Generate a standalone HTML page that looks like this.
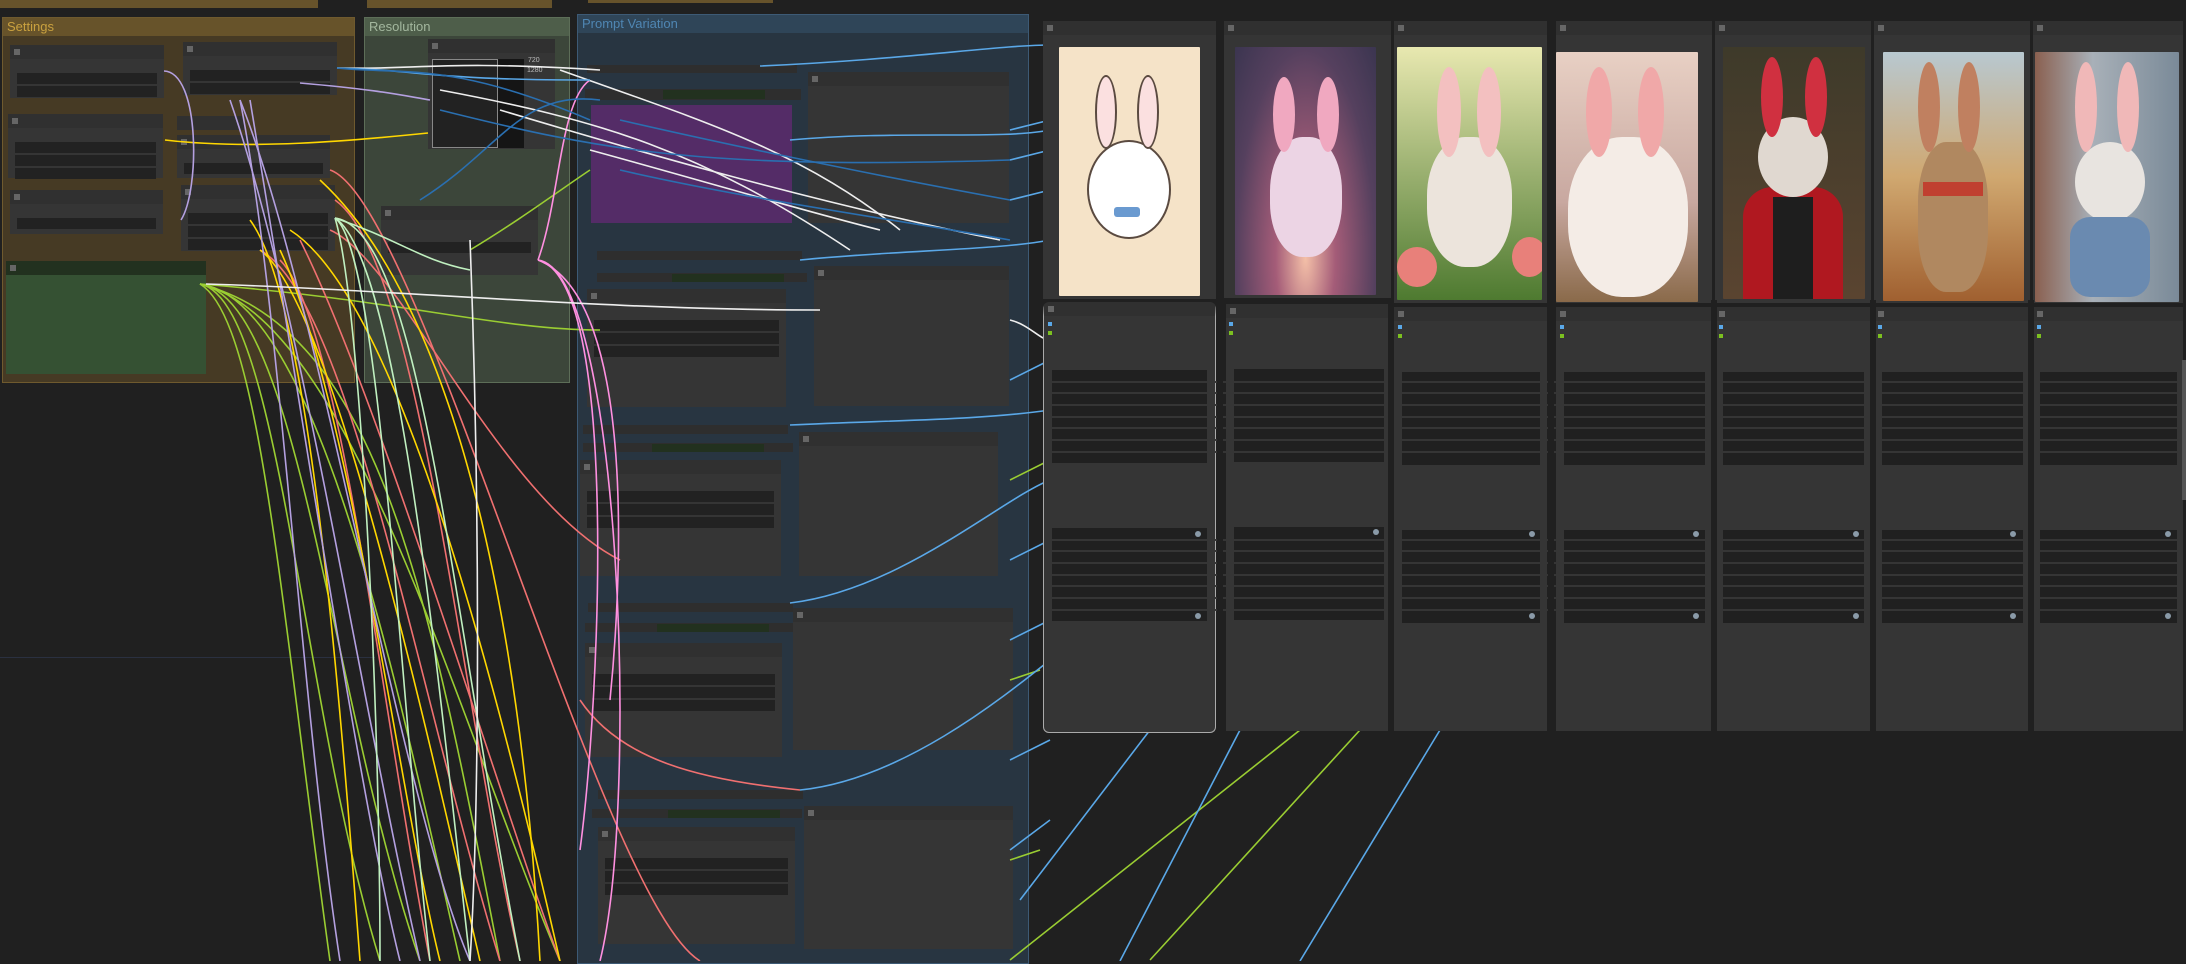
<!DOCTYPE html>
<html><head><meta charset="utf-8"><style>
*{margin:0;padding:0;box-sizing:border-box}
body{width:2186px;height:961px;background:#202020;position:relative;overflow:hidden;font-family:"Liberation Sans",sans-serif}
div{position:absolute}
.g{border:1px solid rgba(255,255,255,0.15)}
.gh{left:0;right:0;top:0;height:18px;font-size:13px;padding-left:4px;line-height:18px}
.n{background:#353535;border-top:14px solid #303030}
.n::before{content:"";position:absolute;left:4px;top:-10px;width:6px;height:6px;background:#666}
.w{background:#222;height:11px}
.bar{background:#2e2e2e;height:9px}
.img{border-radius:1px;overflow:hidden}
</style></head><body>
<div style="left:0;top:0;width:318px;height:8px;background:#67532b"></div>
<div style="left:367px;top:0;width:185px;height:8px;background:#67532b"></div>
<div style="left:588px;top:0;width:185px;height:3px;background:#67532b"></div>

<div class="g" style="left:2px;top:17px;width:353px;height:366px;background:#463a24;border-color:#6f5a2e">
 <div class="gh" style="background:#67532a;color:#c9a13f">Settings</div></div>
<div class="g" style="left:364px;top:17px;width:206px;height:366px;background:#3c463a;border-color:#5d6e58">
 <div class="gh" style="background:#4e5e4a;color:#a3b79e">Resolution</div></div>
<div class="g" style="left:577px;top:14px;width:452px;height:950px;background:#283541;border-color:#3d5a75">
 <div class="gh" style="background:#2f4558;color:#4f86b3">Prompt Variation</div></div>

<div class="n" style="left:10px;top:45px;width:154px;height:53px"><div class="w" style="left:7px;top:14px;width:140px"></div><div class="w" style="left:7px;top:27px;width:140px"></div></div>
<div class="n" style="left:183px;top:42px;width:154px;height:53px"><div class="w" style="left:7px;top:14px;width:140px"></div><div class="w" style="left:7px;top:27px;width:140px"></div></div>
<div class="n" style="left:8px;top:114px;width:155px;height:64px"><div class="w" style="left:7px;top:14px;width:141px"></div><div class="w" style="left:7px;top:27px;width:141px"></div><div class="w" style="left:7px;top:40px;width:141px"></div></div>
<div style="left:177px;top:116px;width:67px;height:14px;background:#303030"></div>
<div class="n" style="left:177px;top:135px;width:153px;height:43px"><div class="w" style="left:7px;top:14px;width:139px"></div></div>
<div class="n" style="left:10px;top:190px;width:153px;height:44px"><div class="w" style="left:7px;top:14px;width:139px"></div></div>
<div class="n" style="left:181px;top:185px;width:154px;height:66px"><div class="w" style="left:7px;top:14px;width:140px"></div><div class="w" style="left:7px;top:27px;width:140px"></div><div class="w" style="left:7px;top:40px;width:140px"></div></div>
<div class="n" style="left:6px;top:261px;width:200px;height:113px;background:#355133;border-top-color:#22311f"></div>

<div class="n" style="left:428px;top:39px;width:127px;height:110px">
 <div style="left:4px;top:6px;width:66px;height:89px;background:#222;border:1px solid #888"></div>
 <div style="left:70px;top:6px;width:26px;height:89px;background:#151515"></div>
 <div style="left:100px;top:4px;font-size:7px;color:#bbb">720</div>
 <div style="left:99px;top:14px;font-size:7px;color:#bbb">1280</div></div>
<div class="n" style="left:381px;top:206px;width:157px;height:69px"><div class="w" style="left:7px;top:22px;width:143px"></div></div>

<div class="bar" style="left:587px;top:65px;width:210px;height:8px"></div>
<div class="bar" style="left:585px;top:89px;width:216px;height:11px"></div>
<div style="left:663px;top:90px;width:102px;height:9px;background:#22311f"></div>
<div style="left:591px;top:105px;width:201px;height:118px;background:#542c67"></div>
<div class="n" style="left:808px;top:72px;width:201px;height:151px"></div>

<div class="bar" style="left:597px;top:251px;width:205px"></div>
<div class="bar" style="left:597px;top:273px;width:210px"></div>
<div style="left:672px;top:274px;width:112px;height:8px;background:#22311f"></div>
<div class="n" style="left:587px;top:289px;width:199px;height:118px"><div class="w" style="left:7px;top:17px;width:185px"></div><div class="w" style="left:7px;top:30px;width:185px"></div><div class="w" style="left:7px;top:43px;width:185px"></div></div>
<div class="n" style="left:814px;top:266px;width:195px;height:140px"></div>

<div class="bar" style="left:583px;top:425px;width:205px"></div>
<div class="bar" style="left:583px;top:443px;width:210px"></div>
<div style="left:652px;top:444px;width:112px;height:8px;background:#22311f"></div>
<div class="n" style="left:580px;top:460px;width:201px;height:116px"><div class="w" style="left:7px;top:17px;width:187px"></div><div class="w" style="left:7px;top:30px;width:187px"></div><div class="w" style="left:7px;top:43px;width:187px"></div></div>
<div class="n" style="left:799px;top:432px;width:199px;height:144px"></div>

<div class="bar" style="left:588px;top:603px;width:205px"></div>
<div class="bar" style="left:585px;top:623px;width:210px"></div>
<div style="left:657px;top:624px;width:112px;height:8px;background:#22311f"></div>
<div class="n" style="left:585px;top:643px;width:197px;height:114px"><div class="w" style="left:7px;top:17px;width:183px"></div><div class="w" style="left:7px;top:30px;width:183px"></div><div class="w" style="left:7px;top:43px;width:183px"></div></div>
<div class="n" style="left:793px;top:608px;width:220px;height:142px"></div>

<div class="bar" style="left:598px;top:790px;width:205px"></div>
<div class="bar" style="left:592px;top:809px;width:210px"></div>
<div style="left:668px;top:810px;width:112px;height:8px;background:#22311f"></div>
<div class="n" style="left:598px;top:827px;width:197px;height:117px"><div class="w" style="left:7px;top:17px;width:183px"></div><div class="w" style="left:7px;top:30px;width:183px"></div><div class="w" style="left:7px;top:43px;width:183px"></div></div>
<div class="n" style="left:804px;top:806px;width:209px;height:143px"></div>

<div style="left:0;top:657px;width:375px;height:1px;background:#2a3040"></div>

<svg style="position:absolute;left:0;top:0" width="2186" height="961" fill="none" stroke-width="1.6">
<g stroke="#9acd32">
<path d="M200 284 C300 300,330 700,420 961"/><path d="M200 284 C280 300,300 700,380 961"/><path d="M200 284 C320 300,400 700,460 961"/><path d="M200 284 C400 300,500 330,600 330"/><path d="M200 284 C350 320,450 700,560 961"/><path d="M200 284 C260 320,280 600,330 961"/><path d="M200 284 C380 330,430 600,500 961"/>
<path d="M1010 960 L1300 730"/><path d="M1150 960 L1360 730"/><path d="M1010 480 L1050 460"/><path d="M1010 680 L1040 670"/><path d="M1010 860 L1040 850"/><path d="M470 250 C520 220,560 190,590 170"/></g>
<g stroke="#f07070"><path d="M335 200 C420 260,460 700,520 961"/><path d="M260 250 C350 300,420 700,500 961"/><path d="M330 170 C420 200,600 900,700 961"/><path d="M300 240 C380 400,500 800,560 961"/><path d="M580 700 C620 760,700 780,800 790"/><path d="M330 230 C400 260,500 500,620 560"/><path d="M280 260 C340 320,380 700,430 961"/></g>
<g stroke="#ffd700"><path d="M165 140 C250 150,350 141,428 133"/><path d="M260 250 C330 300,420 700,480 961"/><path d="M280 250 C350 400,400 800,440 961"/><path d="M290 230 C400 300,500 700,560 961"/><path d="M320 180 C450 300,520 600,540 961"/><path d="M250 220 C310 300,340 700,360 961"/></g>
<g stroke="#b4a0e0"><path d="M164 71 C200 72,200 190,181 220"/><path d="M230 100 C300 300,360 700,420 961"/><path d="M240 100 C320 300,400 800,470 961"/><path d="M300 83 C380 90,400 95,430 100"/><path d="M250 100 C300 400,360 800,400 961"/><path d="M240 100 C280 300,300 700,340 961"/></g>
<g stroke="#c0f0c0"><path d="M335 218 C400 260,440 700,470 961"/><path d="M335 218 C420 230,450 600,520 961"/><path d="M335 218 C380 250,400 700,430 961"/><path d="M335 218 C360 300,380 700,380 961"/><path d="M335 218 C400 240,420 260,470 270"/></g>
<g stroke="#ff90e0"><path d="M538 260 C620 270,640 800,600 961"/><path d="M538 260 C560 200,560 100,590 80"/><path d="M538 260 C620 280,600 700,580 850"/><path d="M538 260 C640 300,620 600,610 700"/></g>
<g stroke="#eee"><path d="M337 68 C420 70,440 60,600 70"/><path d="M206 284 C400 290,600 310,820 310"/><path d="M440 90 C600 120,700 150,850 250"/><path d="M500 110 C600 140,800 200,1000 240"/><path d="M470 240 C480 500,480 800,470 961"/><path d="M1010 320 C1030 325,1040 340,1050 340"/><path d="M560 70 C700 120,800 150,900 230"/><path d="M590 150 C700 180,800 210,880 230"/></g>
<g stroke="#5aa8e8"><path d="M337 68 C420 70,430 80,590 80"/><path d="M760 66 C900 60,1000 45,1050 45"/><path d="M800 260 C900 250,1000 250,1050 240"/><path d="M790 425 C900 420,980 420,1050 410"/><path d="M790 603 C900 590,1000 500,1050 480"/><path d="M800 790 C900 780,1000 700,1050 660"/><path d="M1020 900 L1150 730"/><path d="M1120 961 L1240 730"/><path d="M1300 961 L1440 730"/><path d="M1010 130 L1050 120"/><path d="M1010 160 L1050 150"/><path d="M1010 560 L1050 540"/><path d="M1010 760 L1050 740"/><path d="M1010 200 L1050 190"/><path d="M1010 380 L1050 360"/><path d="M1010 640 L1050 620"/><path d="M1010 850 L1050 820"/><path d="M790 140 C900 130,1000 140,1050 130"/></g>
<g stroke="#2a6fb0"><path d="M337 68 C400 75,450 60,590 120"/><path d="M440 110 C600 150,700 170,1010 160"/><path d="M420 200 C500 150,520 90,600 100"/><path d="M620 120 C750 150,900 180,1010 200"/><path d="M620 170 C750 200,900 220,1010 240"/></g>
</svg>

<div class="n" style="left:1043px;top:21px;width:173px;height:278px"></div>
<div class="n" style="left:1224px;top:21px;width:167px;height:277px"></div>
<div class="n" style="left:1394px;top:21px;width:153px;height:282px"></div>
<div class="n" style="left:1556px;top:21px;width:156px;height:282px"></div>
<div class="n" style="left:1715px;top:21px;width:156px;height:282px"></div>
<div class="n" style="left:1874px;top:21px;width:156px;height:282px"></div>
<div class="n" style="left:2033px;top:21px;width:150px;height:282px"></div>
<div class="img" style="left:1059px;top:47px;width:141px;height:249px;background:#f5e3c8"><div style="left:30px;top:95px;width:80px;height:95px;border-radius:50%;background:#fff;box-shadow:0 0 0 2px #5a4a40"></div><div style="left:38px;top:30px;width:18px;height:70px;border-radius:50%;background:#fbe0e0;box-shadow:0 0 0 2px #5a4a40"></div><div style="left:80px;top:30px;width:18px;height:70px;border-radius:50%;background:#fbe0e0;box-shadow:0 0 0 2px #5a4a40"></div><div style="left:55px;top:160px;width:26px;height:10px;background:#6a9ad0;border-radius:3px"></div></div>
<div class="img" style="left:1235px;top:47px;width:141px;height:248px;background:radial-gradient(ellipse at 50% 85%,#f4c0a8 0%,#a45c78 30%,#55405e 70%,#3b3550 100%)"><div style="left:35px;top:90px;width:72px;height:120px;border-radius:45%;background:#ecd4e4"></div><div style="left:38px;top:30px;width:22px;height:75px;border-radius:50%;background:#f0a8c0"></div><div style="left:82px;top:30px;width:22px;height:75px;border-radius:50%;background:#f0a8c0"></div></div>
<div class="img" style="left:1397px;top:47px;width:145px;height:253px;background:linear-gradient(#e8e8b0,#9ab070 50%,#4e7a30)"><div style="left:30px;top:90px;width:85px;height:130px;border-radius:45%;background:#ece4dc"></div><div style="left:40px;top:20px;width:24px;height:90px;border-radius:50%;background:#f3c0c0"></div><div style="left:80px;top:20px;width:24px;height:90px;border-radius:50%;background:#f3c0c0"></div><div style="left:0;top:200px;width:40px;height:40px;border-radius:50%;background:#e8807a"></div><div style="left:115px;top:190px;width:35px;height:40px;border-radius:50%;background:#e8807a"></div></div>
<div class="img" style="left:1556px;top:52px;width:142px;height:250px;background:linear-gradient(#e8d0c4,#c8a8a0 60%,#8a6a4a)"><div style="left:12px;top:85px;width:120px;height:160px;border-radius:45%;background:#f4ece6"></div><div style="left:30px;top:15px;width:26px;height:90px;border-radius:50%;background:#f0a8a8"></div><div style="left:82px;top:15px;width:26px;height:90px;border-radius:50%;background:#f0a8a8"></div></div>
<div class="img" style="left:1723px;top:47px;width:142px;height:252px;background:linear-gradient(#3e3a2a,#5a4430)"><div style="left:20px;top:140px;width:100px;height:112px;background:#b01820;border-radius:30px 30px 0 0"></div><div style="left:50px;top:150px;width:40px;height:102px;background:#1e1e1e"></div><div style="left:35px;top:70px;width:70px;height:80px;border-radius:50%;background:#e0d8d0"></div><div style="left:38px;top:10px;width:22px;height:80px;border-radius:50%;background:#d03040"></div><div style="left:82px;top:10px;width:22px;height:80px;border-radius:50%;background:#d03040"></div></div>
<div class="img" style="left:1883px;top:52px;width:141px;height:249px;background:linear-gradient(#b8c8d0,#d0a870 50%,#a06030)"><div style="left:35px;top:90px;width:70px;height:150px;border-radius:40%;background:#b08860"></div><div style="left:35px;top:10px;width:22px;height:90px;border-radius:50%;background:#c08060"></div><div style="left:75px;top:10px;width:22px;height:90px;border-radius:50%;background:#c08060"></div><div style="left:40px;top:130px;width:60px;height:14px;background:#c04030"></div></div>
<div class="img" style="left:2035px;top:52px;width:144px;height:250px;background:linear-gradient(90deg,#8a6050,#a8b0b8 40%,#7a8a98)"><div style="left:40px;top:90px;width:70px;height:80px;border-radius:50%;background:#e8e4e0"></div><div style="left:35px;top:165px;width:80px;height:80px;border-radius:20px;background:#6a8ab0"></div><div style="left:40px;top:10px;width:22px;height:90px;border-radius:50%;background:#f0b8b8"></div><div style="left:82px;top:10px;width:22px;height:90px;border-radius:50%;background:#f0b8b8"></div></div>

<div class="n" style="left:1043px;top:302px;width:173px;height:431px;border:1.5px solid #aaa;border-top:14px solid #303030;border-radius:6px"></div>
<div class="n" style="left:1226px;top:304px;width:167px;height:427px"></div>
<div class="n" style="left:1394px;top:307px;width:153px;height:424px"></div>
<div class="n" style="left:1556px;top:307px;width:156px;height:424px"></div>
<div class="n" style="left:1715px;top:307px;width:156px;height:424px"></div>
<div class="n" style="left:1874px;top:307px;width:156px;height:424px"></div>
<div class="n" style="left:2033px;top:307px;width:150px;height:424px"></div>
<svg style="position:absolute;left:0;top:0" width="2186" height="961">
<g fill="#202020">
<rect x="1052" y="370" width="155" height="93"/><rect x="1052" y="528" width="155" height="93"/>
<rect x="1234" y="369" width="150" height="93"/><rect x="1234" y="527" width="150" height="93"/>
<rect x="1402" y="372" width="138" height="93"/><rect x="1402" y="530" width="138" height="93"/>
<rect x="1564" y="372" width="141" height="93"/><rect x="1564" y="530" width="141" height="93"/>
<rect x="1723" y="372" width="141" height="93"/><rect x="1723" y="530" width="141" height="93"/>
<rect x="1882" y="372" width="141" height="93"/><rect x="1882" y="530" width="141" height="93"/>
<rect x="2040" y="372" width="137" height="93"/><rect x="2040" y="530" width="137" height="93"/>
</g>
<g stroke="#353535" stroke-width="2">
<path d="M1050 382H2180M1050 393H2180M1050 405H2180M1050 417H2180M1050 428H2180M1050 440H2180M1050 452H2180"/>
<path d="M1050 540H2180M1050 551H2180M1050 563H2180M1050 575H2180M1050 586H2180M1050 598H2180M1050 610H2180"/>
</g>
<g stroke="#202020" stroke-width="6"><path d="M1220 300V735M1391 300V735M1551 300V735M1714 300V735M1873 300V735M2031 300V735"/></g>
<g fill="#8a9aa8"><circle cx="1198" cy="534" r="3"/><circle cx="1198" cy="616" r="3"/><circle cx="1376" cy="532" r="3"/><circle cx="1532" cy="534" r="3"/><circle cx="1696" cy="534" r="3"/><circle cx="1856" cy="534" r="3"/><circle cx="2013" cy="534" r="3"/><circle cx="2168" cy="534" r="3"/><circle cx="1532" cy="616" r="3"/><circle cx="1696" cy="616" r="3"/><circle cx="1856" cy="616" r="3"/><circle cx="2013" cy="616" r="3"/><circle cx="2168" cy="616" r="3"/></g>
<g fill="#5aa8e8"><rect x="1048" y="322" width="4" height="4"/><rect x="1229" y="322" width="4" height="4"/><rect x="1398" y="325" width="4" height="4"/><rect x="1560" y="325" width="4" height="4"/><rect x="1719" y="325" width="4" height="4"/><rect x="1878" y="325" width="4" height="4"/><rect x="2037" y="325" width="4" height="4"/></g>
<g fill="#7cc020"><rect x="1048" y="331" width="4" height="4"/><rect x="1229" y="331" width="4" height="4"/><rect x="1398" y="334" width="4" height="4"/><rect x="1560" y="334" width="4" height="4"/><rect x="1719" y="334" width="4" height="4"/><rect x="1878" y="334" width="4" height="4"/><rect x="2037" y="334" width="4" height="4"/></g>
</svg>
<div style="left:2182px;top:360px;width:4px;height:140px;background:#555"></div>
</body></html>
